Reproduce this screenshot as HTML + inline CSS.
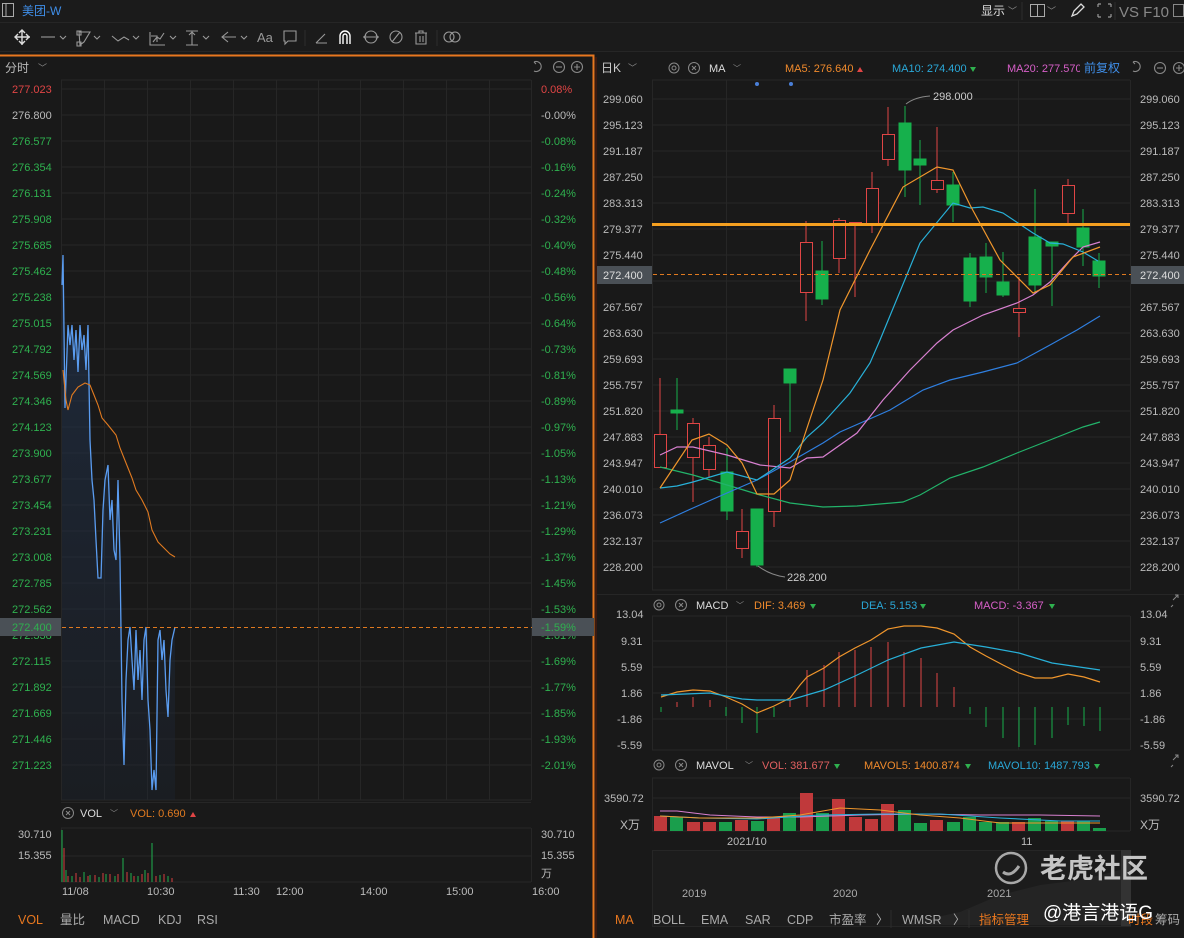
<!DOCTYPE html>
<html><head><meta charset="utf-8">
<style>
html,body{margin:0;padding:0;background:#191919;}
svg{display:block;font-family:"Liberation Sans","Noto Sans CJK SC",sans-serif;}
</style></head><body>
<svg width="1184" height="938" viewBox="0 0 1184 938" xmlns="http://www.w3.org/2000/svg">
<defs>
<linearGradient id="bf" x1="0" y1="0" x2="0" y2="1"><stop offset="0" stop-color="#23395a" stop-opacity="0.55"/><stop offset="1" stop-color="#1d2533" stop-opacity="0.35"/></linearGradient>
</defs>
<rect width="1184" height="938" fill="#191919"/>
<!-- top bar -->
<rect x="0" y="0" width="1184" height="22" fill="#1b1b1b"/>
<line x1="0" y1="22.5" x2="1184" y2="22.5" stroke="#262626"/>
<rect x="2.5" y="3.5" width="11" height="13" fill="none" stroke="#aaa"/><line x1="6" y1="4" x2="6" y2="16" stroke="#aaa"/>
<text x="22" y="15" font-size="12" fill="#3f8ee8">美团-W</text>
<text x="981" y="15" font-size="12" fill="#ddd">显示</text><text x="1008" y="14" font-size="9" fill="#888">﹀</text>
<line x1="1022" y1="2" x2="1022" y2="20" stroke="#2c2c2c"/>
<rect x="1030.5" y="4.5" width="14" height="12" fill="none" stroke="#aaa"/><line x1="1037.5" y1="5" x2="1037.5" y2="16" stroke="#aaa"/><text x="1047" y="14" font-size="9" fill="#888">﹀</text>
<path d="M1072 16 l2-5 7-7 3 3 -7 7z" fill="none" stroke="#ddd" stroke-width="1.3"/>
<path d="M1098 4h3M1098 4v3M1111 4h-3M1111 4v3M1098 17h3M1098 17v-3M1111 17h-3M1111 17v-3" stroke="#999" stroke-width="1.2"/>
<line x1="1115" y1="2" x2="1115" y2="20" stroke="#2c2c2c"/>
<text x="1119" y="17" font-size="15" fill="#888">VS F10</text><rect x="1173.5" y="4.5" width="10" height="12" fill="none" stroke="#888"/>
<!-- toolbar -->
<rect x="0" y="23" width="1184" height="28" fill="#1b1b1b"/>
<line x1="0" y1="51.5" x2="1184" y2="51.5" stroke="#262626"/>
<g stroke="#ddd" stroke-width="1.4" fill="none">
<path d="M22 30v15M15 37h15M19 33l3-3 3 3M19 41l3 3 3-3M18 34l-3 3 3 3M26 34l3 3-3 3"/>
</g>
<g stroke="#999" stroke-width="1.1" fill="none">
<path d="M41 37h14"/><path d="M60 36l3 3 3-3"/>
<path d="M79 32l11 0-6 10-4 3zM77 31h4v4h-4zM77 42h4v4h-4z"/><path d="M94 36l3 3 3-3"/>
<path d="M112 36l6 5 6-4 5 3"/><path d="M133 36l3 3 3-3"/>
<path d="M150 32v13h15M153 42l4-5 3 2 4-6M151 36h6v6"/><path d="M170 36l3 3 3-3"/>
<path d="M186 31h12M186 45h12M192 33v12M189 35l3-3 3 3"/><path d="M203 36l3 3 3-3"/>
<path d="M222 37h14M228 32l-6 5 6 5"/><path d="M241 36l3 3 3-3"/>
<path d="M284 31h12v10h-8l-3 3v-3h-1z"/>
<line x1="305" y1="30" x2="305" y2="46" stroke="#2c2c2c"/>
<path d="M316 43h11M316 43l9-9"/>
<circle cx="371" cy="37" r="6"/><path d="M363 37h16M366 35l-2 2 2 2M376 35l2 2-2 2"/>
<circle cx="396" cy="37" r="6"/><path d="M392 42l8-10"/>
<path d="M415 33h12M419 33v-2h4v2M416 33v11h10V33M420 36v6M423 36v6"/>
<line x1="437" y1="30" x2="437" y2="46" stroke="#2c2c2c"/>
<circle cx="449" cy="37" r="5"/><circle cx="455" cy="37" r="5"/>
</g>
<path d="M340 44V36a5 5 0 0 1 10 0v8M343 44V36a2 2 0 0 1 4 0v8" stroke="#fff" stroke-width="1.4" fill="none"/>
<text x="257" y="42" font-size="13" fill="#999">Aa</text>
<!-- orange frame left -->
<path d="M0 55.5H593.5V938" fill="none" stroke="#e8771f" stroke-width="2"/>

<!-- LEFT PANEL -->
<text x="5" y="72" font-size="12" fill="#bbb">分时</text><text x="38" y="71" font-size="9" fill="#888">﹀</text>
<g stroke="#888" fill="none" stroke-width="1.1"><path d="M534 62a5 5 0 1 1 0 9M534 62l2 2"/><circle cx="559" cy="67" r="5.5"/><path d="M556 67h6"/><circle cx="577" cy="67" r="5.5"/><path d="M574 67h6M577 64v6"/></g>
<g stroke="#262626" stroke-width="1">
<path d="M61 80H531M61 800H531"/>
<path d="M61 89H531M61 115H531M61 141H531M61 167H531M61 193H531M61 219H531M61 245H531M61 271H531M61 297H531M61 323H531M61 349H531M61 375H531M61 401H531M61 427H531M61 453H531M61 479H531M61 505H531M61 531H531M61 557H531M61 583H531M61 609H531M61 661H531M61 687H531M61 713H531M61 739H531M61 765H531"/>
<path d="M61.5 80V800M104.5 80V800M147.5 80V800M190.5 80V800M233.5 80V800M276.5 80V800M318.5 80V800M360.5 80V800M403.5 80V800M446.5 80V800M489.5 80V800M531.5 80V800"/>
</g>
<polygon fill="url(#bf)" points="62,285 63,255 64,330 65,408 66,380 68,325 70,345 72,325 74,360 76,330 78,372 80,325 82,350 84,335 86,370 88,325 90,440 92,480 94,500 96,540 98,578 101,578 103,510 105,480 108,465 110,520 112,500 114,550 116,560 118,480 120,560 122,700 124,765 126,680 128,640 130,627 132,660 134,690 136,630 138,680 140,650 142,700 144,640 146,627 148,700 150,730 152,790 154,770 156,790 158,640 160,630 162,660 164,640 166,690 168,717 170,660 172,640 175,627 175,800 62,800"/>
<polyline fill="none" stroke="#5a9cf0" stroke-width="1.3" points="62,285 63,255 64,330 65,408 66,380 68,325 70,345 72,325 74,360 76,330 78,372 80,325 82,350 84,335 86,370 88,325 90,440 92,480 94,500 96,540 98,578 101,578 103,510 105,480 108,465 110,520 112,500 114,550 116,560 118,480 120,560 122,700 124,765 126,680 128,640 130,627 132,660 134,690 136,630 138,680 140,650 142,700 144,640 146,627 148,700 150,730 152,790 154,770 156,790 158,640 160,630 162,660 164,640 166,690 168,717 170,660 172,640 175,627"/>
<polyline fill="none" stroke="#e07a20" stroke-width="1.1" points="63,370 66,400 68,410 72,395 78,387 85,383 90,385 94,395 98,405 102,418 108,425 112,430 116,435 120,448 124,458 128,468 132,478 136,490 142,500 148,512 152,530 158,542 164,548 170,554 175,557"/>
<line x1="62" y1="627.5" x2="594" y2="627.5" stroke="#e07a20" stroke-dasharray="4,3"/>
<g font-size="11" fill="#2fb14f">
<text x="12" y="93" fill="#e04545">277.023</text><text x="12" y="119" fill="#bbb">276.800</text><text x="12" y="145">276.577</text><text x="12" y="171">276.354</text><text x="12" y="197">276.131</text><text x="12" y="223">275.908</text><text x="12" y="249">275.685</text><text x="12" y="275">275.462</text><text x="12" y="301">275.238</text><text x="12" y="327">275.015</text><text x="12" y="353">274.792</text><text x="12" y="379">274.569</text><text x="12" y="405">274.346</text><text x="12" y="431">274.123</text><text x="12" y="457">273.900</text><text x="12" y="483">273.677</text><text x="12" y="509">273.454</text><text x="12" y="535">273.231</text><text x="12" y="561">273.008</text><text x="12" y="587">272.785</text><text x="12" y="613">272.562</text><text x="12" y="639">272.338</text><text x="12" y="665">272.115</text><text x="12" y="691">271.892</text><text x="12" y="717">271.669</text><text x="12" y="743">271.446</text><text x="12" y="769">271.223</text>
<text x="541" y="93" fill="#e04545">0.08%</text><text x="541" y="119" fill="#bbb">-0.00%</text><text x="541" y="145">-0.08%</text><text x="541" y="171">-0.16%</text><text x="541" y="197">-0.24%</text><text x="541" y="223">-0.32%</text><text x="541" y="249">-0.40%</text><text x="541" y="275">-0.48%</text><text x="541" y="301">-0.56%</text><text x="541" y="327">-0.64%</text><text x="541" y="353">-0.73%</text><text x="541" y="379">-0.81%</text><text x="541" y="405">-0.89%</text><text x="541" y="431">-0.97%</text><text x="541" y="457">-1.05%</text><text x="541" y="483">-1.13%</text><text x="541" y="509">-1.21%</text><text x="541" y="535">-1.29%</text><text x="541" y="561">-1.37%</text><text x="541" y="587">-1.45%</text><text x="541" y="613">-1.53%</text><text x="541" y="639">-1.61%</text><text x="541" y="665">-1.69%</text><text x="541" y="691">-1.77%</text><text x="541" y="717">-1.85%</text><text x="541" y="743">-1.93%</text><text x="541" y="769">-2.01%</text>
</g>
<rect x="0" y="618" width="61" height="18" fill="#4a5056"/><text x="12" y="631" font-size="11" fill="#2fb14f">272.400</text>
<rect x="532" y="618" width="62" height="18" fill="#4a5056"/><text x="541" y="631" font-size="11" fill="#2fb14f">-1.59%</text>
<!-- left vol -->
<line x1="61" y1="802.5" x2="531" y2="802.5" stroke="#262626"/>
<circle cx="68" cy="813" r="5.5" fill="none" stroke="#888"/><path d="M66 811l4 4M70 811l-4 4" stroke="#888"/>
<text x="80" y="817" font-size="11" fill="#ddd">VOL</text><text x="110" y="816" font-size="8" fill="#888">﹀</text>
<text x="130" y="817" font-size="11" fill="#e07a20">VOL: 0.690</text><path d="M190 817l3-5 3 5z" fill="#e04545"/>
<g stroke="#262626"><path d="M61 828H531M61 856H531M61 882H531M61.5 828V882M531.5 828V882"/></g>
<g stroke-width="1">
<path stroke="#1fb14f" d="M62 882V830M66 882V870M72 882V876M84 882V872M90 882V875M99 882V877M106 882V874M115 882V876M123 882V858M131 882V873M138 882V876M145 882V870M152 882V843M160 882V875M168 882V876"/>
<path stroke="#d84040" d="M64 882V848M68 882V876M76 882V873M80 882V877M88 882V876M95 882V875M103 882V873M110 882V874M118 882V874M127 882V872M134 882V876M142 882V874M148 882V873M156 882V876M164 882V874M172 882V878"/>
</g>
<g font-size="11" fill="#bbb"><text x="18" y="838">30.710</text><text x="18" y="859">15.355</text><text x="541" y="838">30.710</text><text x="541" y="859">15.355</text><text x="541" y="877">万</text>
<text x="62" y="895">11/08</text><text x="147" y="895">10:30</text><text x="233" y="895">11:30</text><text x="276" y="895">12:00</text><text x="360" y="895">14:00</text><text x="446" y="895">15:00</text><text x="532" y="895">16:00</text></g>
<g font-size="12.5"><text x="18" y="924" fill="#e8771f">VOL</text><text x="60" y="924" fill="#aaa">量比</text><text x="103" y="924" fill="#aaa">MACD</text><text x="158" y="924" fill="#aaa">KDJ</text><text x="197" y="924" fill="#aaa">RSI</text></g>

<!-- RIGHT PANEL -->
<rect x="595" y="57" width="2" height="881" fill="#3a1a10"/>
<text x="601" y="72" font-size="12" fill="#ccc">日K</text><text x="628" y="71" font-size="9" fill="#888">﹀</text>
<circle cx="674" cy="68" r="5" fill="none" stroke="#888"/><circle cx="674" cy="68" r="2" fill="none" stroke="#888"/>
<circle cx="694" cy="68" r="5.5" fill="none" stroke="#888"/><path d="M692 66l4 4M696 66l-4 4" stroke="#888"/>
<text x="709" y="72" font-size="11" fill="#ddd">MA</text><text x="733" y="71" font-size="8" fill="#888">﹀</text>
<text x="785" y="72" font-size="11" fill="#f08a2c">MA5: 276.640</text><path d="M857 72l3-5 3 5z" fill="#e04545"/>
<text x="892" y="72" font-size="11" fill="#2aa8d8">MA10: 274.400</text><path d="M970 67l3 5 3-5z" fill="#2fb14f"/>
<text x="1007" y="72" font-size="11" fill="#d75fc8">MA20: 277.570</text>
<rect x="1080" y="58" width="46" height="20" fill="#191919"/><text x="1084" y="72" font-size="12" fill="#3f8ee8">前复权</text>
<g stroke="#888" fill="none" stroke-width="1.1"><path d="M1133 62a5 5 0 1 1 0 9M1133 62l2 2"/><circle cx="1160" cy="68" r="5.5"/><path d="M1157 68h6"/><circle cx="1179" cy="68" r="5.5"/><path d="M1176 68h6M1179 65v6"/></g>
<circle cx="757" cy="84" r="2" fill="#4a7fd8"/><circle cx="791" cy="84" r="2" fill="#4a7fd8"/>
<g stroke="#262626">
<path d="M652 80H1130M652 590H1130"/>
<path d="M652 99H1130M652 125H1130M652 151H1130M652 177H1130M652 203H1130M652 229H1130M652 255H1130M652 281H1130M652 307H1130M652 333H1130M652 359H1130M652 385H1130M652 411H1130M652 437H1130M652 463H1130M652 489H1130M652 515H1130M652 541H1130M652 567H1130"/>
<path d="M652.5 80V590M726.5 80V590M1018.5 80V590M1130.5 80V590"/>
</g>
<!-- candles -->
<g stroke-width="1">
<g stroke="#e04545" fill="#191919">
<line x1="660" y1="378" x2="660" y2="468"/><rect x="654.5" y="434.5" width="12" height="33"/>
<line x1="693" y1="418" x2="693" y2="502"/><rect x="687.5" y="423.5" width="12" height="34"/>
<line x1="709" y1="437" x2="709" y2="478"/><rect x="703.5" y="445.5" width="12" height="24"/>
<line x1="742" y1="509" x2="742" y2="558"/><rect x="736.5" y="531.5" width="12" height="17"/>
<line x1="774" y1="405" x2="774" y2="527"/><rect x="768.5" y="418.5" width="12" height="93"/>
<line x1="806" y1="221" x2="806" y2="321"/><rect x="800.5" y="242.5" width="12" height="50"/>
<line x1="839" y1="218" x2="839" y2="273"/><rect x="833.5" y="220.5" width="12" height="38"/>
<line x1="855" y1="222" x2="855" y2="297"/><rect x="849.5" y="222.5" width="12" height="1"/>
<line x1="872" y1="172" x2="872" y2="233"/><rect x="866.5" y="188.5" width="12" height="35"/>
<line x1="888" y1="107" x2="888" y2="166"/><rect x="882.5" y="134.5" width="12" height="25"/>
<line x1="937" y1="127" x2="937" y2="193"/><rect x="931.5" y="180.5" width="12" height="9"/>
<line x1="1019" y1="277" x2="1019" y2="337"/><rect x="1013.5" y="308.5" width="12" height="4"/>
<line x1="1068" y1="179" x2="1068" y2="223"/><rect x="1062.5" y="185.5" width="12" height="28"/>
</g>
<g stroke="#16b04c" fill="#16b04c">
<line x1="677" y1="378" x2="677" y2="430"/><rect x="671" y="410" width="12" height="3"/>
<line x1="727" y1="448" x2="727" y2="520"/><rect x="721" y="472" width="12" height="39"/>
<line x1="757" y1="509" x2="757" y2="567"/><rect x="751" y="509" width="12" height="56"/>
<line x1="790" y1="369" x2="790" y2="432"/><rect x="784" y="369" width="12" height="14"/>
<line x1="822" y1="241" x2="822" y2="305"/><rect x="816" y="271" width="12" height="28"/>
<line x1="905" y1="106" x2="905" y2="197"/><rect x="899" y="123" width="12" height="47"/>
<line x1="920" y1="140" x2="920" y2="205"/><rect x="914" y="159" width="12" height="6"/>
<line x1="953" y1="172" x2="953" y2="222"/><rect x="947" y="185" width="12" height="20"/>
<line x1="970" y1="253" x2="970" y2="307"/><rect x="964" y="258" width="12" height="43"/>
<line x1="986" y1="243" x2="986" y2="293"/><rect x="980" y="257" width="12" height="20"/>
<line x1="1003" y1="252" x2="1003" y2="297"/><rect x="997" y="282" width="12" height="13"/>
<line x1="1035" y1="189" x2="1035" y2="293"/><rect x="1029" y="237" width="12" height="48"/>
<line x1="1052" y1="242" x2="1052" y2="306"/><rect x="1046" y="242" width="12" height="4"/>
<line x1="1083" y1="209" x2="1083" y2="266"/><rect x="1077" y="228" width="12" height="19"/>
<line x1="1099" y1="253" x2="1099" y2="288"/><rect x="1093" y="261" width="12" height="15"/>
</g>
</g>
<g fill="none" stroke-width="1.2">
<polyline stroke="#22b36a" points="660,467 693,475 727,485 760,495 790,503 823,507 857,506 903,502 920,495 950,478 983,467 1017,453 1050,440 1083,427 1100,422"/>
<polyline stroke="#2f7fe0" points="660,523 693,508 727,493 757,480 790,462 823,443 840,432 890,410 923,390 950,380 983,372 1017,363 1050,345 1077,330 1100,316"/>
<polyline stroke="#d880d0" points="660,455 677,447 693,447 727,455 760,465 790,468 807,458 823,457 857,433 883,400 910,370 937,343 953,330 983,315 1017,303 1033,295 1050,282 1070,260 1083,247 1100,242"/>
<polyline stroke="#28b0d8" points="660,488 677,486 693,482 727,472 757,480 790,458 807,437 823,423 850,393 870,363 880,340 920,243 953,203 970,208 983,207 1003,213 1033,233 1050,243 1063,244 1083,252 1098,261"/>
<polyline stroke="#f0962c" points="660,488 692,440 709,434 727,445 742,463 757,494 774,494 790,480 803,440 823,380 840,310 870,250 903,187 937,167 953,170 970,205 1000,260 1033,293 1050,285 1073,257 1100,247"/>
</g>
<line x1="652" y1="224.5" x2="1130" y2="224.5" stroke="#f5a020" stroke-width="3"/>
<line x1="597" y1="274.5" x2="1184" y2="274.5" stroke="#e07a20" stroke-dasharray="4,3"/>
<path d="M906 104 Q915 97 930 96" stroke="#888" fill="none"/><text x="933" y="100" font-size="11" fill="#ccc">298.000</text>
<path d="M758 566 Q770 575 785 577" stroke="#888" fill="none"/><text x="787" y="581" font-size="11" fill="#ccc">228.200</text>
<g font-size="11" fill="#bbb">
<text x="603" y="103">299.060</text><text x="603" y="129">295.123</text><text x="603" y="155">291.187</text><text x="603" y="181">287.250</text><text x="603" y="207">283.313</text><text x="603" y="233">279.377</text><text x="603" y="259">275.440</text><text x="603" y="311">267.567</text><text x="603" y="337">263.630</text><text x="603" y="363">259.693</text><text x="603" y="389">255.757</text><text x="603" y="415">251.820</text><text x="603" y="441">247.883</text><text x="603" y="467">243.947</text><text x="603" y="493">240.010</text><text x="603" y="519">236.073</text><text x="603" y="545">232.137</text><text x="603" y="571">228.200</text>
<text x="1140" y="103">299.060</text><text x="1140" y="129">295.123</text><text x="1140" y="155">291.187</text><text x="1140" y="181">287.250</text><text x="1140" y="207">283.313</text><text x="1140" y="233">279.377</text><text x="1140" y="259">275.440</text><text x="1140" y="311">267.567</text><text x="1140" y="337">263.630</text><text x="1140" y="363">259.693</text><text x="1140" y="389">255.757</text><text x="1140" y="415">251.820</text><text x="1140" y="441">247.883</text><text x="1140" y="467">243.947</text><text x="1140" y="493">240.010</text><text x="1140" y="519">236.073</text><text x="1140" y="545">232.137</text><text x="1140" y="571">228.200</text>
</g>
<rect x="597" y="266" width="55" height="18" fill="#4a5056"/><text x="603" y="279" font-size="11" fill="#ddd">272.400</text>
<rect x="1131" y="266" width="53" height="18" fill="#4a5056"/><text x="1140" y="279" font-size="11" fill="#ddd">272.400</text>

<!-- MACD -->
<line x1="597" y1="594.5" x2="1184" y2="594.5" stroke="#262626"/>
<circle cx="659" cy="605" r="5" fill="none" stroke="#888"/><circle cx="659" cy="605" r="2" fill="none" stroke="#888"/>
<circle cx="681" cy="605" r="5.5" fill="none" stroke="#888"/><path d="M679 603l4 4M683 603l-4 4" stroke="#888"/>
<text x="696" y="609" font-size="11" fill="#ddd">MACD</text><text x="736" y="608" font-size="8" fill="#888">﹀</text>
<text x="754" y="609" font-size="11" fill="#f08a2c">DIF: 3.469</text><path d="M810 604l3 5 3-5z" fill="#2fb14f"/>
<text x="861" y="609" font-size="11" fill="#2aa8d8">DEA: 5.153</text><path d="M920 604l3 5 3-5z" fill="#2fb14f"/>
<text x="974" y="609" font-size="11" fill="#d75fc8">MACD: -3.367</text><path d="M1049 604l3 5 3-5z" fill="#2fb14f"/>
<path d="M1173 600l5-5M1175 595h3v3M1173 605l-2 2" stroke="#888" fill="none"/>
<g stroke="#262626"><path d="M652 616H1130M652 641H1130M652 667H1130M652 693H1130M652 719H1130M652 750H1130M652.5 616V750M726.5 616V750M1018.5 616V750M1130.5 616V750"/></g>
<g stroke-width="1">
<path stroke="#e04545" d="M677 707V702M693 707V697M710 707V700M790 707V700M807 707V670M824 707V665M839 707V652M855 707V650M871 707V647M888 707V642M904 707V652M921 707V658M937 707V673M954 707V687"/>
<path stroke="#16b04c" d="M661 707V712M726 707V716M742 707V723M757 707V733M774 707V717M970 707V714M986 707V727M1003 707V738M1019 707V747M1035 707V745M1052 707V738M1068 707V725M1084 707V726M1100 707V731"/>
</g>
<polyline fill="none" stroke="#f0962c" stroke-width="1.2" points="661,697 677,692 693,690 710,691 726,697 742,704 757,713 774,706 790,698 800,685 807,677 824,668 839,657 855,648 871,640 888,629 904,626 921,626 937,628 954,634 970,647 986,656 1003,665 1019,673 1035,678 1052,678 1068,674 1084,677 1100,682"/>
<polyline fill="none" stroke="#28b0d8" stroke-width="1.2" points="661,695 710,693 742,699 757,700 790,700 824,690 855,676 888,660 921,648 954,642 986,647 1019,653 1052,663 1100,670"/>
<g font-size="11" fill="#bbb"><text x="616" y="618">13.04</text><text x="621" y="645">9.31</text><text x="621" y="671">5.59</text><text x="621" y="697">1.86</text><text x="617" y="723">-1.86</text><text x="617" y="749">-5.59</text>
<text x="1140" y="618">13.04</text><text x="1140" y="645">9.31</text><text x="1140" y="671">5.59</text><text x="1140" y="697">1.86</text><text x="1140" y="723">-1.86</text><text x="1140" y="749">-5.59</text></g>

<!-- MAVOL -->
<circle cx="659" cy="765" r="5" fill="none" stroke="#888"/><circle cx="659" cy="765" r="2" fill="none" stroke="#888"/>
<circle cx="681" cy="765" r="5.5" fill="none" stroke="#888"/><path d="M679 763l4 4M683 763l-4 4" stroke="#888"/>
<text x="696" y="769" font-size="11" fill="#ddd">MAVOL</text><text x="745" y="768" font-size="8" fill="#888">﹀</text>
<text x="762" y="769" font-size="11" fill="#e06060">VOL: 381.677</text><path d="M834 764l3 5 3-5z" fill="#2fb14f"/>
<text x="864" y="769" font-size="11" fill="#f08a2c">MAVOL5: 1400.874</text><path d="M965 764l3 5 3-5z" fill="#2fb14f"/>
<text x="988" y="769" font-size="11" fill="#2aa8d8">MAVOL10: 1487.793</text><path d="M1094 764l3 5 3-5z" fill="#2fb14f"/>
<path d="M1173 760l5-5M1175 755h3v3M1173 765l-2 2" stroke="#888" fill="none"/>
<g stroke="#262626"><path d="M652 778H1130M652 798H1130M652 831H1130M652.5 778V831M1130.5 778V831"/></g>
<g fill="#c0393b">
<rect x="654" y="816" width="13" height="15"/><rect x="687" y="822" width="13" height="9"/><rect x="703" y="822" width="13" height="9"/><rect x="735" y="820" width="13" height="11"/><rect x="767" y="818" width="13" height="13"/><rect x="800" y="793" width="13" height="38"/><rect x="832" y="799" width="13" height="32"/><rect x="849" y="817" width="13" height="14"/><rect x="865" y="819" width="13" height="12"/><rect x="881" y="804" width="13" height="27"/><rect x="930" y="820" width="13" height="11"/><rect x="1012" y="822" width="13" height="9"/><rect x="1061" y="821" width="13" height="10"/>
</g>
<g fill="#1a9e4c">
<rect x="670" y="817" width="13" height="14"/><rect x="719" y="822" width="13" height="9"/><rect x="751" y="821" width="13" height="10"/><rect x="783" y="813" width="13" height="18"/><rect x="816" y="813" width="13" height="18"/><rect x="898" y="810" width="13" height="21"/><rect x="914" y="823" width="13" height="8"/><rect x="947" y="822" width="13" height="9"/><rect x="963" y="817" width="13" height="14"/><rect x="979" y="822" width="13" height="9"/><rect x="996" y="822" width="13" height="9"/><rect x="1028" y="818" width="13" height="13"/><rect x="1045" y="821" width="13" height="10"/><rect x="1077" y="821" width="13" height="10"/><rect x="1093" y="828" width="13" height="3"/>
</g>
<g fill="none" stroke-width="1.1">
<polyline stroke="#d880d0" points="660,811 677,811 710,815 757,817 800,817 860,815 920,814 980,815 1040,815 1100,816"/>
<polyline stroke="#28b0d8" points="660,816 700,818 757,819 820,815 880,814 940,814 1000,818 1060,821 1100,821"/>
<polyline stroke="#f0962c" points="660,816 700,818 760,818 800,815 840,808 880,810 920,815 960,818 1000,823 1050,823 1100,823"/>
</g>
<g font-size="11" fill="#bbb"><text x="604" y="802">3590.72</text><text x="620" y="829" font-size="12">X万</text><text x="1140" y="802">3590.72</text><text x="1140" y="829" font-size="12">X万</text>
<text x="727" y="845">2021/10</text><text x="1021" y="845">11</text></g>
<!-- overview -->
<rect x="652.5" y="850.5" width="478" height="76" fill="#1c1c1c" stroke="#262626"/>
<path d="M900 925 L960 912 L1000 895 L1040 885 L1080 880 L1120 870 L1130 868 V925Z" fill="#242424"/>
<rect x="1121" y="850" width="10" height="76" fill="#333"/>
<g font-size="11" fill="#aaa"><text x="682" y="897">2019</text><text x="833" y="897">2020</text><text x="987" y="897">2021</text></g>
<!-- watermark -->
<circle cx="1011" cy="868" r="15" fill="none" stroke="#ccc" stroke-width="2.5" opacity="0.8"/>
<path d="M1003 872 q8 6 16 -6" stroke="#ccc" stroke-width="3" fill="none" opacity="0.8"/>
<text x="1040" y="878" font-size="27" font-weight="bold" fill="#d8d8d8" opacity="0.9">老虎社区</text>
<!-- bottom tabs -->
<g font-size="12.5" fill="#aaa">
<text x="615" y="924" fill="#e8771f">MA</text><text x="653" y="924">BOLL</text><text x="701" y="924">EMA</text><text x="745" y="924">SAR</text><text x="787" y="924">CDP</text><text x="829" y="924">市盈率</text><text x="876" y="924">〉</text><text x="902" y="924">WMSR</text><text x="953" y="924">〉</text><text x="979" y="924" fill="#e8771f">指标管理</text><text x="1128" y="924" fill="#e8771f">时段</text><text x="1155" y="924">筹码</text>
</g>
<line x1="891" y1="910" x2="891" y2="928" stroke="#2c2c2c"/><line x1="969" y1="910" x2="969" y2="928" stroke="#2c2c2c"/>
<text x="1043" y="919" font-size="19" fill="#fff">@港言港语G</text>
</svg>
</body></html>
